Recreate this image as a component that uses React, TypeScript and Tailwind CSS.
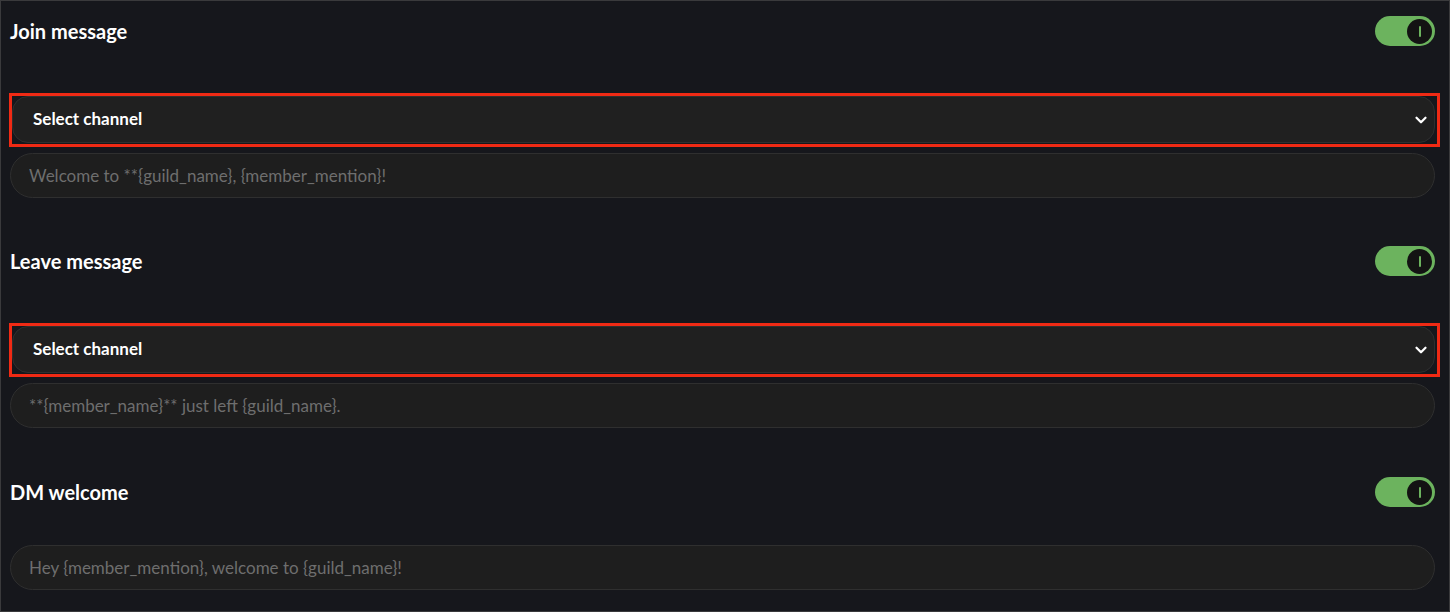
import { ChevronDown } from "lucide-react"

function Toggle() {
  return (
    <div className="flex h-[30px] w-[60px] items-center justify-end rounded-full bg-[#6cb35e] pr-[3px]">
      <div className="flex h-[25px] w-[25px] items-center justify-center rounded-full bg-[#131313]">
        <div className="h-[11px] w-[2px] rounded-full bg-[#6cb35e]" />
      </div>
    </div>
  )
}

function Header({ title }: { title: string }) {
  return (
    <div className="flex h-[30px] items-center justify-between">
      <h2 className="text-[20px] font-bold text-white">{title}</h2>
      <Toggle />
    </div>
  )
}

function ChannelSelect() {
  return (
    <div className="mt-[47px] -ml-px -mr-[5px] border-[3px] border-[#f02a14] pr-[2px] pb-px">
      <div className="flex h-[47px] items-center justify-between rounded-2xl border border-[#2f2f2f] bg-[#202020] pl-[20px] pr-[4px]">
        <span className="-mt-[2px] text-[17px] font-bold text-white">Select channel</span>
        <ChevronDown size={18} strokeWidth={3} className="text-white" />
      </div>
    </div>
  )
}

function MessageInput({ placeholder, className }: { placeholder: string; className: string }) {
  return (
    <input
      type="text"
      placeholder={placeholder}
      className={`${className} block h-[45px] w-full rounded-full border border-[#2f2f2f] bg-[#1e1e1e] px-[18px] text-[17px] text-white outline-none placeholder:text-[#6e6e6e]`}
    />
  )
}

export default function App() {
  return (
    <div
      className="min-h-screen border border-[#3a3a3c] bg-[#16171c] pt-[15px] pl-[9px] pr-[14px]"
      style={{ fontFamily: "Lato, 'Noto Sans', sans-serif" }}
    >
      <section>
        <Header title="Join message" />
        <ChannelSelect />
        <MessageInput className="mt-[6px]" placeholder="Welcome to **{guild_name}, {member_mention}!" />
      </section>

      <section className="mt-[48px]">
        <Header title="Leave message" />
        <ChannelSelect />
        <MessageInput className="mt-[6px]" placeholder="**{member_name}** just left {guild_name}." />
      </section>

      <section className="mt-[49px]">
        <Header title="DM welcome" />
        <MessageInput className="mt-[38px]" placeholder="Hey {member_mention}, welcome to {guild_name}!" />
      </section>
    </div>
  )
}
